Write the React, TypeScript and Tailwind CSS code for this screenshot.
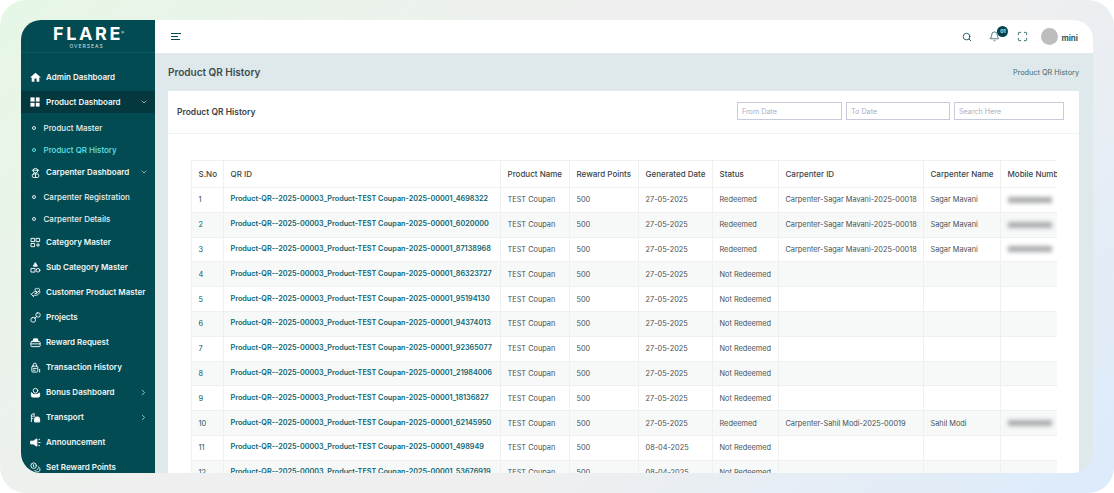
import React from "react";
import { Bell, ChevronDown, ChevronRight, Coins, HandHeart, Maximize, Search } from "lucide-react";
import { MdHome } from "react-icons/md";

const rows = [
  { id: "4698322", date: "27-05-2025", status: "Redeemed", cid: "Carpenter-Sagar Mavani-2025-00018", name: "Sagar Mavani", mobile: true },
  { id: "6020000", date: "27-05-2025", status: "Redeemed", cid: "Carpenter-Sagar Mavani-2025-00018", name: "Sagar Mavani", mobile: true },
  { id: "87138968", date: "27-05-2025", status: "Redeemed", cid: "Carpenter-Sagar Mavani-2025-00018", name: "Sagar Mavani", mobile: true },
  { id: "86323727", date: "27-05-2025", status: "Not Redeemed" },
  { id: "95194130", date: "27-05-2025", status: "Not Redeemed" },
  { id: "94374013", date: "27-05-2025", status: "Not Redeemed" },
  { id: "92365077", date: "27-05-2025", status: "Not Redeemed" },
  { id: "21984006", date: "27-05-2025", status: "Not Redeemed" },
  { id: "18136827", date: "27-05-2025", status: "Not Redeemed" },
  { id: "62145950", date: "27-05-2025", status: "Redeemed", cid: "Carpenter-Sahil Modi-2025-00019", name: "Sahil Modi", mobile: true },
  { id: "498949", date: "08-04-2025", status: "Not Redeemed" },
  { id: "53676919", date: "08-04-2025", status: "Not Redeemed" },
];

const headers = [
  { label: "S.No", w: "w-[32px]" },
  { label: "QR ID", w: "w-[277px]" },
  { label: "Product Name", w: "w-[69px]" },
  { label: "Reward Points", w: "w-[69px]" },
  { label: "Generated Date", w: "w-[74px]" },
  { label: "Status", w: "w-[66px]" },
  { label: "Carpenter ID", w: "w-[145px]" },
  { label: "Carpenter Name", w: "w-[77px]" },
  { label: "Mobile Number", w: "w-[91px]" },
];

const Ico = ({ children }: { children: React.ReactNode }) => (
  <svg viewBox="0 0 24 24" width="11" height="11" fill="none" stroke="currentColor" strokeWidth="2" strokeLinecap="round" strokeLinejoin="round">
    {children}
  </svg>
);

const icons = {
  product: (
    <svg viewBox="0 0 24 24" width="10" height="10" fill="currentColor">
      <rect x="1" y="1" width="10" height="10" />
      <rect x="14" y="1" width="9" height="10" />
      <rect x="1" y="14" width="10" height="9" />
      <rect x="14" y="14" width="9" height="9" />
    </svg>
  ),
  carpenter: (
    <Ico>
      <circle cx="12" cy="8" r="5" />
      <path d="M5 7h14" />
      <rect x="5" y="15" width="14" height="8" rx="3" />
      <path d="M12 15v8" />
    </Ico>
  ),
  category: (
    <Ico>
      <rect x="3" y="3" width="7" height="7" />
      <rect x="14" y="3" width="7" height="7" />
      <rect x="3" y="14" width="7" height="7" />
      <path d="M17.5 14v7M14 17.5h7" />
    </Ico>
  ),
  sub: (
    <Ico>
      <path d="M12 2l4 7H8z" fill="currentColor" />
      <rect x="3" y="14" width="8" height="8" />
      <circle cx="17.5" cy="18" r="4" />
    </Ico>
  ),
  projects: (
    <Ico>
      <rect x="2" y="12" width="10" height="10" rx="4" />
      <rect x="13" y="2" width="9" height="9" rx="3" />
      <path d="M10 14l5-5" />
    </Ico>
  ),
  reward: (
    <Ico>
      <rect x="2" y="10" width="20" height="11" rx="2" />
      <path d="M6 10l2-6h8l2 6" fill="currentColor" />
      <path d="M2 15h20" />
    </Ico>
  ),
  transaction: (
    <Ico>
      <rect x="4" y="9" width="13" height="13" rx="2" />
      <path d="M7 9V6a3.5 3.5 0 017 0v3M7 14h7M7 18h4M21 16v6" />
    </Ico>
  ),
  bonus: (
    <Ico>
      <circle cx="12" cy="8" r="5" />
      <path d="M3 13v6a3 3 0 003 3h12a3 3 0 003-3v-6l-5 3H8z" fill="currentColor" />
    </Ico>
  ),
  transport: (
    <Ico>
      <path d="M3 21V6l6-3v8" />
      <path d="M10 21v-6l2-4h7l2 4v6z" fill="currentColor" />
      <path d="M6 9v1M6 14v1" />
    </Ico>
  ),
  announce: (
    <Ico>
      <path d="M2 9h5l8-5v16l-8-5H2z" fill="currentColor" />
      <path d="M19 6l2-1M19 12h3M19 18l2 1" />
    </Ico>
  ),
};

const NavItem = ({
  icon,
  label,
  active,
  arrow,
}: {
  icon: React.ReactNode;
  label: string;
  active?: boolean;
  arrow?: "down" | "right";
}) => (
  <div
    className={
      "flex h-[22px] items-center rounded-r-[2px] pl-[9px] pr-[7px] " +
      (active ? "mb-[4px] mt-px bg-[#03383f] pb-px" : "mb-[3px]")
    }
  >
    <span className="flex w-[16px] justify-start text-white">{icon}</span>
    <span className="flex-1 whitespace-nowrap text-[8px] font-semibold text-[#f1f7f7]">{label}</span>
    {arrow === "down" && <ChevronDown size={8} className="text-[#d5e4e5]" />}
    {arrow === "right" && <ChevronRight size={9} className="text-[#d5e4e5]" />}
  </div>
);

const SubItem = ({ label, active }: { label: string; active?: boolean }) => (
  <div className="flex h-[22px] items-center pl-[10.5px]">
    <span className={"h-[4px] w-[4px] rounded-full border " + (active ? "border-[#62e3e6]" : "border-[#e4eeee]")} />
    <span
      className={"ml-[8px] whitespace-nowrap text-[8px] font-medium " + (active ? "text-[#62e3e6]" : "text-[#e8f1f1]")}
    >
      {label}
    </span>
  </div>
);

const Sidebar = () => (
  <aside className="h-full w-[134px] shrink-0 overflow-hidden bg-[#034b52]">
    <div className="flex h-[33px] flex-col items-center border-b border-[#0d5a61] pt-[5px]">
      <div className="relative text-[18px] leading-[17px] font-bold tracking-[2.6px] text-white">
        FLARE
        <span className="absolute -right-[1px] top-[-1px] text-[4px] font-normal tracking-normal">®</span>
      </div>
      <div className="mt-[1.5px] pr-[3px] text-[5px] leading-[5px] tracking-[1px] text-[#d6e4e5]">OVERSEAS</div>
    </div>
    <nav className="pt-[13px]">
      <NavItem icon={<MdHome size={13} className="-ml-px" />} label="Admin Dashboard" />
      <NavItem icon={icons.product} label="Product Dashboard" active arrow="down" />
      <div>
        <SubItem label="Product Master" />
        <SubItem label="Product QR History" active />
      </div>
      <NavItem icon={icons.carpenter} label="Carpenter Dashboard" arrow="down" />
      <div className="mb-px">
        <SubItem label="Carpenter Registration" />
        <SubItem label="Carpenter Details" />
      </div>
      <NavItem icon={icons.category} label="Category Master" />
      <NavItem icon={icons.sub} label="Sub Category Master" />
      <NavItem icon={<HandHeart size={11} />} label="Customer Product Master" />
      <NavItem icon={icons.projects} label="Projects" />
      <NavItem icon={icons.reward} label="Reward Request" />
      <NavItem icon={icons.transaction} label="Transaction History" />
      <NavItem icon={icons.bonus} label="Bonus Dashboard" arrow="right" />
      <NavItem icon={icons.transport} label="Transport" arrow="right" />
      <NavItem icon={icons.announce} label="Announcement" />
      <NavItem icon={<Coins size={11} />} label="Set Reward Points" />
    </nav>
  </aside>
);

const Topbar = () => (
  <header className="flex h-[33px] shrink-0 items-center bg-white pl-[16px] pr-[15px]">
    <div className="flex flex-col gap-[2px]">
      <span className="h-px w-[10px] bg-[#07484f]" />
      <span className="h-px w-[7px] bg-[#07484f]" />
      <span className="h-px w-[9px] bg-[#07484f]" />
    </div>
    <div className="ml-auto flex items-center text-[#07484f]">
      <Search size={10} strokeWidth={2} />
      <div className="relative ml-[17px]">
        <Bell size={11} strokeWidth={1.5} />
        <span className="absolute -top-[5px] left-[8px] flex h-[11px] w-[11px] items-center justify-center rounded-full bg-[#03444b] text-[5px] font-semibold text-white">
          01
        </span>
      </div>
      <Maximize size={11} strokeWidth={1.75} className="ml-[17px]" />
      <span className="ml-[13px] h-[17px] w-[17px] rounded-full bg-[#bdbdbd]" />
      <span className="ml-[3px] mt-[3px] text-[8px] font-bold text-[#2c5b61]">mini</span>
    </div>
  </header>
);

const DateInput = ({ placeholder, w }: { placeholder: string; w: string }) => (
  <input
    readOnly
    placeholder={placeholder}
    className={
      "h-[18px] border border-[#c8cbdd] bg-white px-[4px] text-[7.2px] outline-none placeholder:text-[#a9aebf] " + w
    }
  />
);

const HistoryTable = () => (
  <div className="ml-[23px] mr-[22px] mt-[26px] overflow-hidden">
    <table className="w-[900px] table-fixed border-collapse text-[7.35px] text-[#474f52]">
      <colgroup>
        {headers.map((h) => (
          <col key={h.label} className={h.w} />
        ))}
      </colgroup>
      <thead>
        <tr className="h-[27px]">
          {headers.map((h) => (
            <th
              key={h.label}
              className="overflow-hidden whitespace-nowrap border border-[#eff1f1] px-[6.5px] text-left text-[8px] font-medium text-[#3c4347]"
            >
              {h.label}
            </th>
          ))}
        </tr>
      </thead>
      <tbody>
        {rows.map((r, i) => (
          <tr key={r.id} className={"h-[24.8px] " + (i % 2 === 1 ? "bg-[#f7f9f9]" : "bg-white")}>
            <td className="border border-[#eff1f1] px-[6.5px] text-[#0f565c]">{i + 1}</td>
            <td className="whitespace-nowrap border border-[#eff1f1] px-[6.5px] text-[7.25px] font-semibold text-[#0b6470]">
              {"Product-QR--2025-00003_Product-TEST Coupan-2025-00001_" + r.id}
            </td>
            <td className="whitespace-nowrap border border-[#eff1f1] px-[6.5px]">TEST Coupan</td>
            <td className="border border-[#eff1f1] px-[6.5px]">500</td>
            <td className="border border-[#eff1f1] px-[6.5px]">{r.date}</td>
            <td className="whitespace-nowrap border border-[#eff1f1] px-[6.5px]">{r.status}</td>
            <td className="whitespace-nowrap border border-[#eff1f1] px-[6.5px]">{r.cid}</td>
            <td className="whitespace-nowrap border border-[#eff1f1] px-[6.5px]">{r.name}</td>
            <td className="border border-[#eff1f1] px-[6.5px]">
              {r.mobile && <div className="h-[6px] w-[44px] bg-[#a9abae] blur-[2px]" />}
            </td>
          </tr>
        ))}
      </tbody>
    </table>
  </div>
);

export default function App() {
  return (
    <div className="h-[493px] w-[1114px] overflow-hidden rounded-[26px] bg-[linear-gradient(135deg,#e6f7e6_0%,#efefef_40%,#efefef_62%,#dcebfb_100%)] pb-[20px] pl-[21px] pr-[21px] pt-[20px] font-['Inter',sans-serif]">
      <div className="flex h-[453px] overflow-hidden rounded-[20px]">
        <Sidebar />
        <div className="flex min-w-0 flex-1 flex-col">
          <Topbar />
          <main className="flex min-h-0 flex-1 flex-col bg-[#dfe9eb] pl-[13px] pr-[14px]">
            <div className="flex h-[38px] shrink-0 items-center justify-between">
              <h1 className="text-[10px] font-semibold text-[#3e4c50]">Product QR History</h1>
              <span className="mt-[2px] text-[7.3px] text-[#3f6b71]">Product QR History</span>
            </div>
            <section className="min-h-0 flex-1 overflow-hidden bg-white">
              <div className="flex h-[43px] items-center border-b border-[#f1f3f3] pl-[9px] pr-[15px]">
                <h2 className="text-[8.5px] font-semibold text-[#3c4347]">Product QR History</h2>
                <div className="mb-[2px] ml-auto flex gap-[4px]">
                  <DateInput placeholder="From Date" w="w-[105px]" />
                  <DateInput placeholder="To Date" w="w-[104px]" />
                  <DateInput placeholder="Search Here" w="w-[110px]" />
                </div>
              </div>
              <HistoryTable />
            </section>
          </main>
        </div>
      </div>
    </div>
  );
}
